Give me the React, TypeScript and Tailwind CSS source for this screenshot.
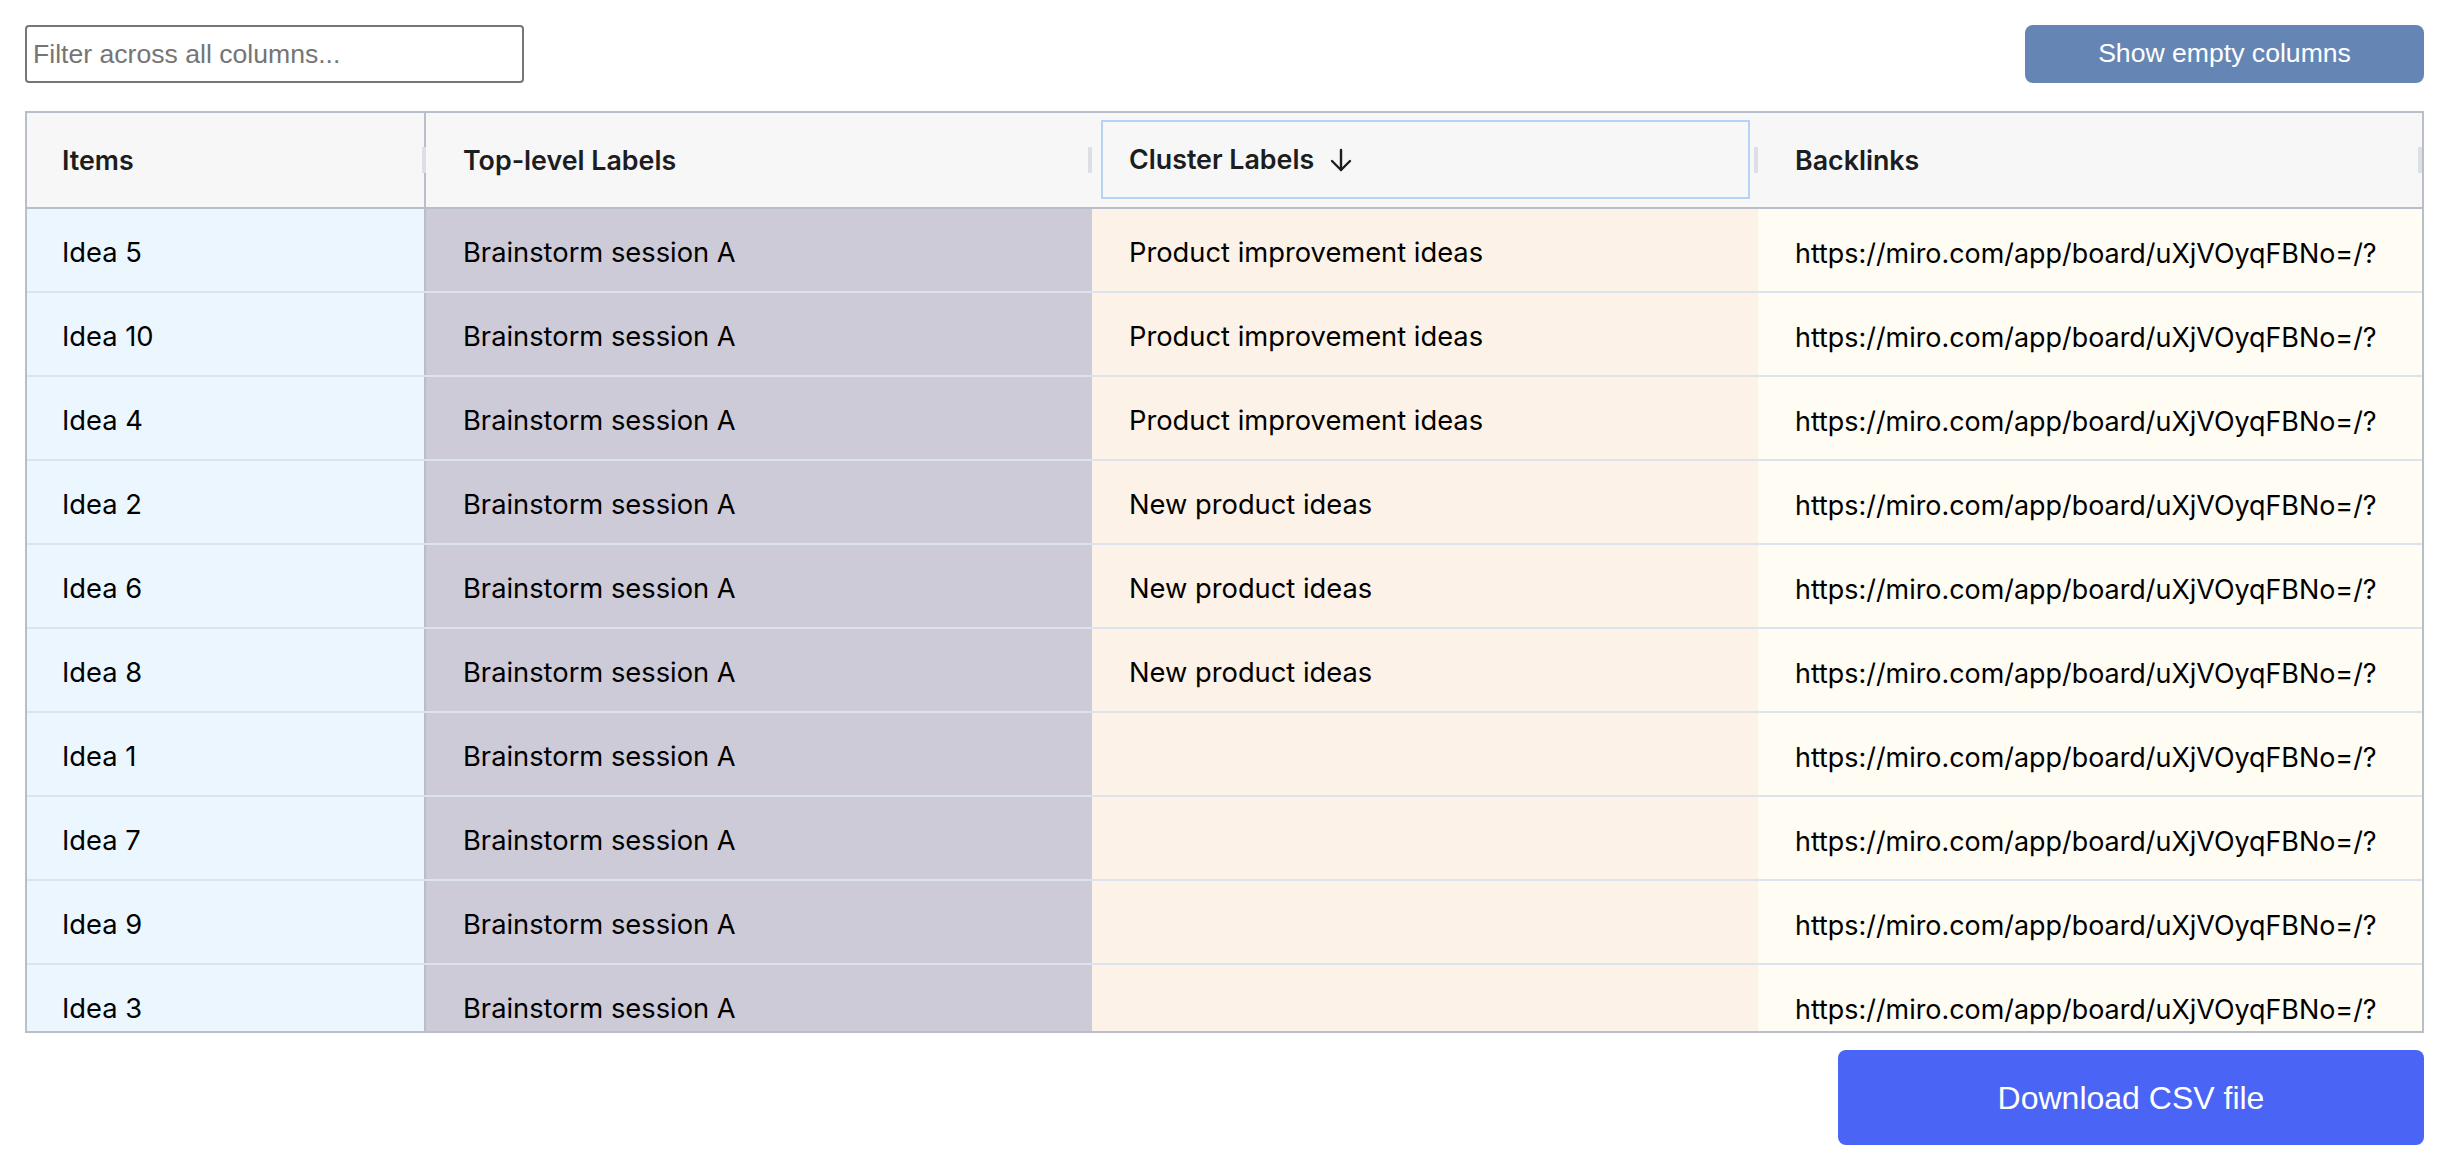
import React from "react";

const rows: [string, string, string][] = [
  ["Idea 5", "Brainstorm session A", "Product improvement ideas"],
  ["Idea 10", "Brainstorm session A", "Product improvement ideas"],
  ["Idea 4", "Brainstorm session A", "Product improvement ideas"],
  ["Idea 2", "Brainstorm session A", "New product ideas"],
  ["Idea 6", "Brainstorm session A", "New product ideas"],
  ["Idea 8", "Brainstorm session A", "New product ideas"],
  ["Idea 1", "Brainstorm session A", ""],
  ["Idea 7", "Brainstorm session A", ""],
  ["Idea 9", "Brainstorm session A", ""],
  ["Idea 3", "Brainstorm session A", ""],
];

const url = "https://miro.com/app/board/uXjVOyqFBNo=/?";

function Handle() {
  return <div className="absolute right-0 top-[34px] h-[26px] w-[4px] bg-[#dcdfe5]" />;
}

export default function App() {
  return (
    <div className="min-h-[1170px] bg-white pl-[25px] pr-[22px] pt-[25px]" style={{ fontFamily: "Inter, 'Noto Sans', sans-serif" }}>
      <div className="flex items-center justify-between">
        <input
          placeholder="Filter across all columns..."
          className="h-[58px] w-[499px] rounded-[4px] border-2 border-[#767676] pl-[6px] text-[26.6px] text-black placeholder:text-[#757575] outline-none"
          style={{ fontFamily: "'Liberation Sans', Arial, sans-serif" }}
        />
        <button
          className="h-[58px] w-[399px] rounded-[8px] bg-[#6586b5] text-[26.6px] text-white"
          style={{ fontFamily: "'Liberation Sans', Arial, sans-serif" }}
        >
          Show empty columns
        </button>
      </div>

      <div className="mt-[28px] h-[922px] overflow-hidden border-2 border-[#b9bfc8]">
        <div className="flex h-[96px] border-b-2 border-[#b9bfc8] bg-[#f7f7f7] text-[26.8px] font-semibold text-[#1b1d20]">
          <div className="relative flex w-[399px] shrink-0 items-center border-r-2 border-[#b9bfc8] pl-[35px]">
            Items
            <div className="absolute right-[-2px] top-[34px] h-[26px] w-[4px] bg-[#dcdfe5]" />
          </div>
          <div className="relative flex w-[666px] shrink-0 items-center pl-[37px]">
            Top-level Labels
            <Handle />
          </div>
          <div className="relative flex w-[666px] shrink-0 p-[7px_8px_8px_9px]">
            <div className="flex flex-1 items-center border-2 border-[#b4d3f5] pl-[26px]">
              <span>Cluster Labels</span>
              <svg className="ml-[15px]" width="24" height="26" viewBox="0 0 24 26" fill="none" stroke="#1b1d20" strokeWidth="2.4" strokeLinecap="round" strokeLinejoin="round">
                <path d="M12 3v20" />
                <path d="M3 14l9 9 9-9" />
              </svg>
            </div>
            <Handle />
          </div>
          <div className="relative flex flex-1 items-center pl-[37px]">
            Backlinks
            <Handle />
          </div>
        </div>

        {rows.map((r, i) => (
          <div key={i} className="flex h-[84px] shrink-0 border-b-2 border-[#dde3ec] text-[27.3px] text-black">
            <div className="flex w-[399px] shrink-0 items-center border-r-2 border-[#b9bfc8] bg-[#ebf6fe] pl-[35px] pt-[6px]">
              {r[0]}
            </div>
            <div className="flex w-[666px] shrink-0 items-center bg-[#cdcbd8] pl-[37px] pt-[6px]">{r[1]}</div>
            <div className="flex w-[666px] shrink-0 items-center bg-[#fcf2e7] pl-[37px] pt-[6px]">{r[2]}</div>
            <div className="flex min-w-0 flex-1 items-center overflow-hidden whitespace-nowrap bg-[#fefcf3] pl-[37px] pt-[6px] text-[26.9px]">{url}</div>
          </div>
        ))}
      </div>

      <div className="mt-[17px] flex justify-end">
        <button
          className="h-[95px] w-[586px] rounded-[8px] bg-[#4a64f5] text-[32px] text-white"
          style={{ fontFamily: "'Liberation Sans', Arial, sans-serif" }}
        >
          Download CSV file
        </button>
      </div>
    </div>
  );
}
